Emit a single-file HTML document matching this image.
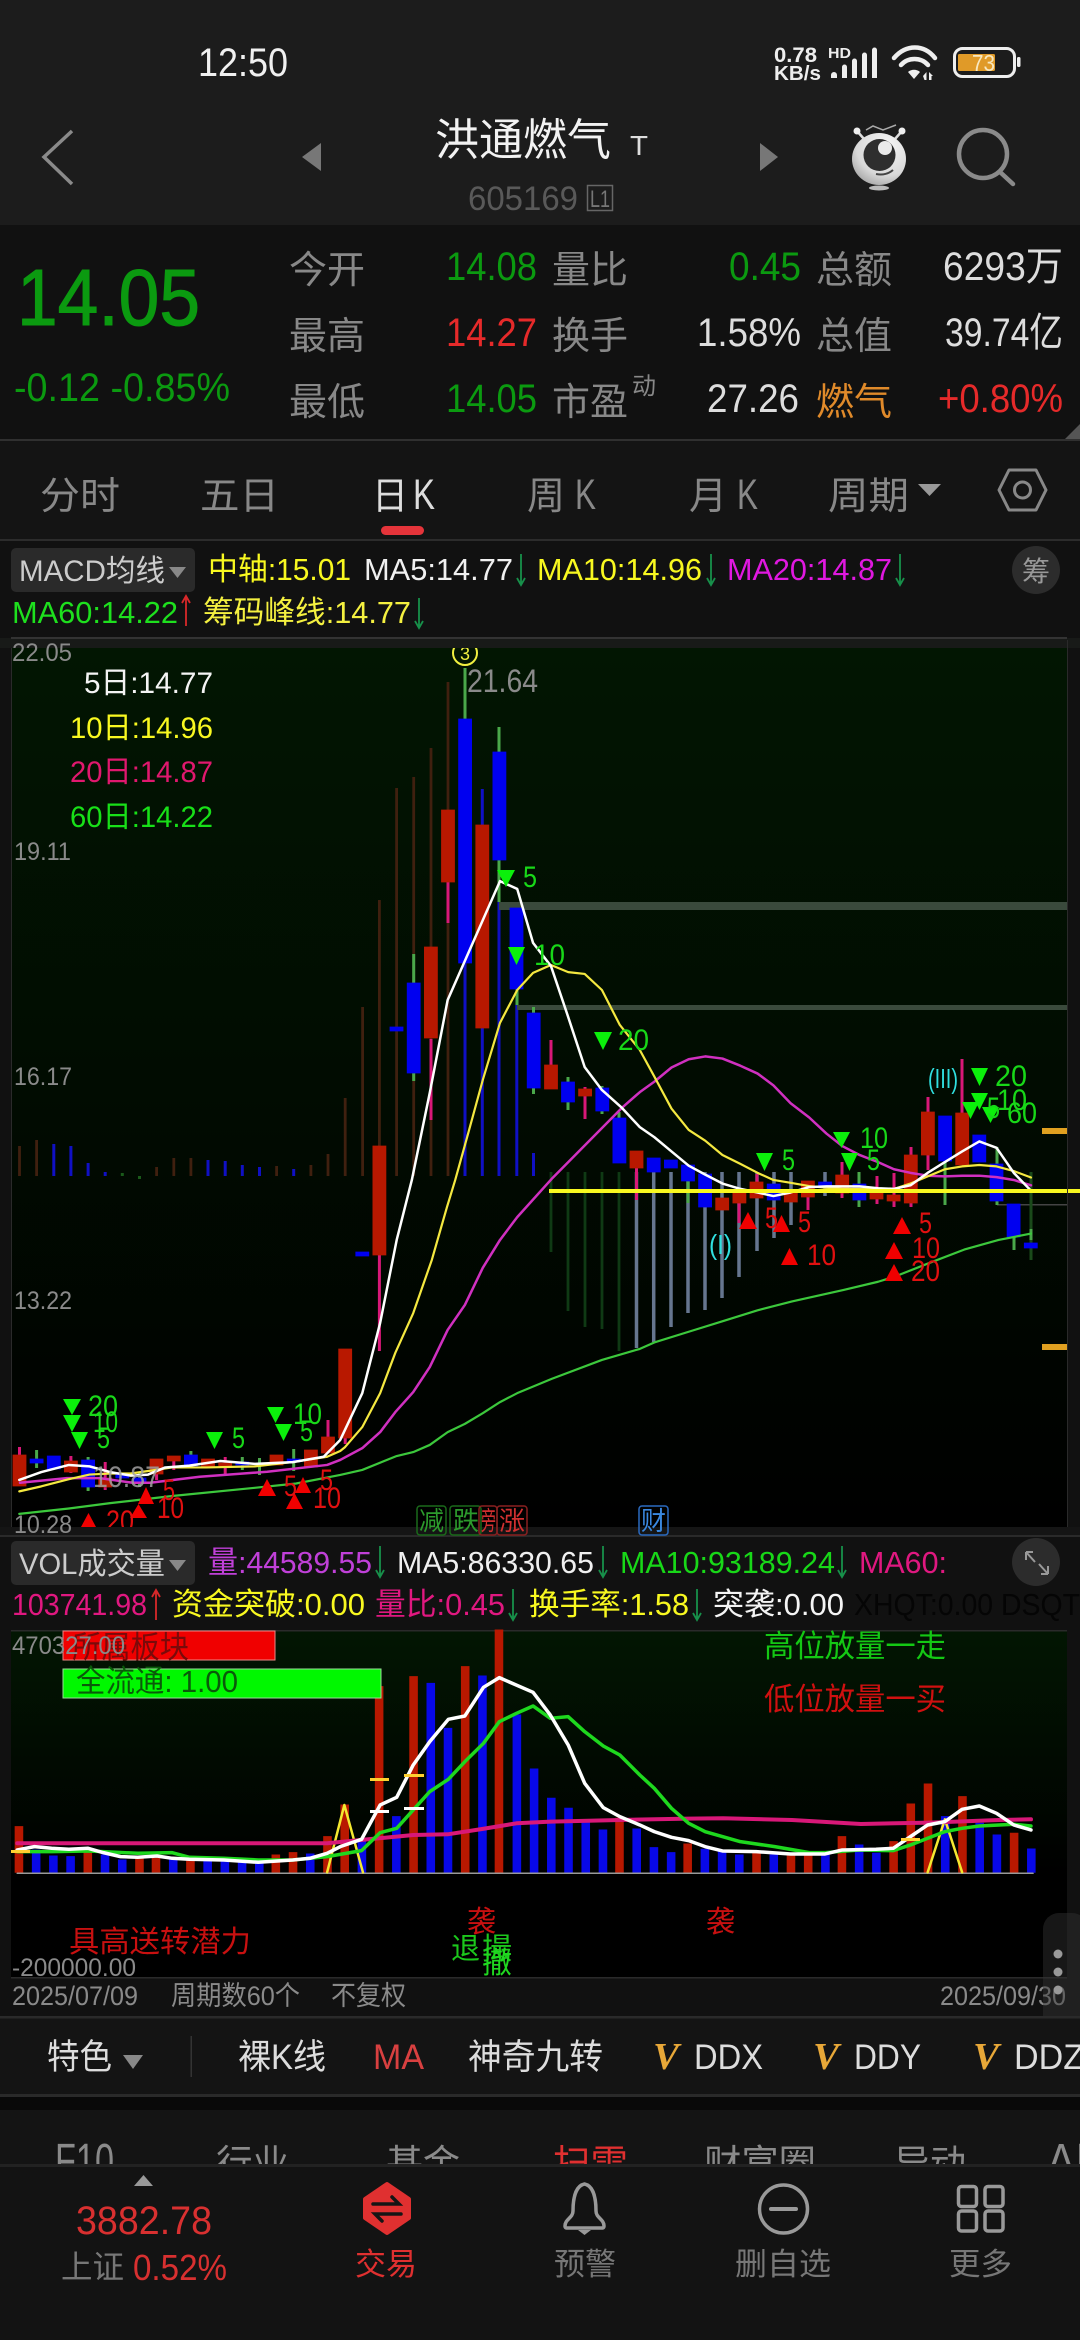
<!DOCTYPE html>
<html lang="zh-CN"><head><meta charset="utf-8"><title>洪通燃气</title>
<style>
html,body{margin:0;padding:0;background:#111;width:1080px;height:2340px;overflow:hidden}
svg{display:block;font-family:"Liberation Sans","Noto Sans CJK SC",sans-serif}
.n{vector-effect:non-scaling-stroke;fill:none;stroke-linejoin:round;stroke-linecap:round}
.b{vector-effect:non-scaling-stroke}
</style></head><body>
<svg width="1080" height="2340" viewBox="0 0 1080 2340" xmlns="http://www.w3.org/2000/svg">
<defs>
<linearGradient id="g1" x1="0" y1="0" x2="0" y2="1"><stop offset="0" stop-color="#021602"/><stop offset=".5" stop-color="#010c01"/><stop offset="1" stop-color="#000"/></linearGradient>
<linearGradient id="g2" x1="0" y1="0" x2="0" y2="1"><stop offset="0" stop-color="#021602"/><stop offset=".7" stop-color="#000"/><stop offset="1" stop-color="#000"/></linearGradient>
<radialGradient id="eg" cx=".65" cy=".25" r=".95"><stop offset="0" stop-color="#f6f6f6"/><stop offset=".6" stop-color="#d8d8d8"/><stop offset="1" stop-color="#8e8e8e"/></radialGradient>
</defs>
<rect width="1080" height="2340" fill="#111"/>
<!-- header -->
<rect width="1080" height="225" fill="#1c1c1c"/>
<text x="198" y="76" font-size="40" fill="#f0f0f0" textLength="90" lengthAdjust="spacingAndGlyphs">12:50</text>
<text x="774" y="62" font-size="21" font-weight="bold" fill="#eee" textLength="43" lengthAdjust="spacingAndGlyphs">0.78</text>
<text x="774" y="80" font-size="20" font-weight="bold" fill="#eee" textLength="47" lengthAdjust="spacingAndGlyphs">KB/s</text>
<text x="828" y="58" font-size="15" font-weight="bold" fill="#eee" textLength="23" lengthAdjust="spacingAndGlyphs">HD</text>
<path fill="#eee" d="M831 75a3 3 0 0 1 6 0v3h-6zM842 67a2.500 2.500 0 0 1 5 0v11h-5zM852 61a2.500 2.500 0 0 1 5 0v17h-5zM862 55a2.500 2.500 0 0 1 5 0v23h-5zM872 50a2.500 2.500 0 0 1 5 0v28h-5z"/>
<g fill="none" stroke="#eee" stroke-width="4.500" stroke-linecap="round"><path d="M894 58C906 44 924 44 935 58"/><path d="M901 65C908 57 921 57 928 65"/></g>
<path fill="#eee" d="M908 72C911 69 917 69 920 72L914 79z"/><path fill="#eee" d="M923 76l3.500-4v8h-2zM929 72l4 4h-1.500v4h-2.500z"/>
<rect x="954.500" y="48.500" width="60" height="28" rx="8" fill="none" stroke="#eee" stroke-width="3"/>
<rect x="958" y="54" width="37" height="17" rx="1.500" fill="#e09a28"/>
<text x="972" y="71" font-size="23" fill="#f8e8c0" textLength="23" lengthAdjust="spacingAndGlyphs">73</text>
<rect x="1017" y="57" width="3.500" height="10" rx="1.500" fill="#eee"/>

<path d="M72 131L44 157L72 184" fill="none" stroke="#8a8a8a" stroke-width="3.500"/>
<path d="M321 143V171L302 157z" fill="#777"/><path d="M760 143V171L778 157z" fill="#777"/>
<text x="435" y="155" font-size="44" fill="#f2f2f2" textLength="176" lengthAdjust="spacingAndGlyphs">洪通燃气</text>
<text x="630" y="155" font-size="28" fill="#ddd" textLength="18" lengthAdjust="spacingAndGlyphs">T</text>
<text x="468" y="210" font-size="34" fill="#595959" textLength="110" lengthAdjust="spacingAndGlyphs">605169</text>
<rect x="587.500" y="185.500" width="25" height="25" fill="none" stroke="#666" stroke-width="1.500"/>
<text x="590" y="207" font-size="24" fill="#777" textLength="20" lengthAdjust="spacingAndGlyphs">L1</text>
<!-- mascot -->
<path d="M866 130L873 126L883 130L896 125" fill="none" stroke="#aaa" stroke-width="1.500"/>
<path d="M857 131L864 139M902 131L895 139" fill="none" stroke="#ddd" stroke-width="2.500"/>
<circle cx="857" cy="131" r="3.500" fill="#eee"/><circle cx="902" cy="131" r="3.500" fill="#eee"/>
<ellipse cx="879" cy="159" rx="27" ry="26" fill="url(#eg)"/>
<circle cx="879.500" cy="155" r="16" fill="#2e2e2e"/><circle cx="885" cy="148" r="7" fill="#eaeaea"/>
<path d="M876 174Q886 176 893 170" stroke="#444" stroke-width="2" fill="none"/>
<ellipse cx="879" cy="188" rx="10" ry="2.500" fill="#bbb"/>
<!-- search -->
<circle cx="983" cy="154" r="24" fill="none" stroke="#8a8a8a" stroke-width="4.500"/><path d="M1000 172L1013 184" stroke="#8a8a8a" stroke-width="4.500" stroke-linecap="round"/>

<!-- stats -->
<text x="17" y="325" font-size="80" fill="#0b9a10" stroke="#0b9a10" stroke-width="1" textLength="183" lengthAdjust="spacingAndGlyphs">14.05</text>
<text x="14" y="401" font-size="40" fill="#0b9a10" textLength="216" lengthAdjust="spacingAndGlyphs">-0.12 -0.85%</text>
<g font-size="38" fill="#888">
<text x="289" y="283" textLength="76" lengthAdjust="spacingAndGlyphs">今开</text>
<text x="289" y="349" textLength="76" lengthAdjust="spacingAndGlyphs">最高</text>
<text x="289" y="415" textLength="76" lengthAdjust="spacingAndGlyphs">最低</text>
<text x="552" y="283" textLength="76" lengthAdjust="spacingAndGlyphs">量比</text>
<text x="552" y="349" textLength="76" lengthAdjust="spacingAndGlyphs">换手</text>
<text x="552" y="415" textLength="76" lengthAdjust="spacingAndGlyphs">市盈</text>
<text x="816" y="283" textLength="76" lengthAdjust="spacingAndGlyphs">总额</text>
<text x="816" y="349" textLength="76" lengthAdjust="spacingAndGlyphs">总值</text>
<text x="816" y="415" fill="#e08a2a" textLength="76" lengthAdjust="spacingAndGlyphs">燃气</text>
<text x="632" y="394" font-size="24" textLength="24" lengthAdjust="spacingAndGlyphs">动</text>
</g>
<g font-size="40">
<text x="446" y="280" fill="#0b9a10" textLength="91" lengthAdjust="spacingAndGlyphs">14.08</text>
<text x="446" y="346" fill="#e62a2a" textLength="91" lengthAdjust="spacingAndGlyphs">14.27</text>
<text x="446" y="412" fill="#0b9a10" textLength="91" lengthAdjust="spacingAndGlyphs">14.05</text>
<text x="729" y="280" fill="#0b9a10" textLength="72" lengthAdjust="spacingAndGlyphs">0.45</text>
<text x="697" y="346" fill="#ddd" textLength="104" lengthAdjust="spacingAndGlyphs">1.58%</text>
<text x="707" y="412" fill="#ddd" textLength="92" lengthAdjust="spacingAndGlyphs">27.26</text>
<text x="943" y="280" fill="#ddd" textLength="120" lengthAdjust="spacingAndGlyphs">6293万</text>
<text x="945" y="346" fill="#ddd" textLength="118" lengthAdjust="spacingAndGlyphs">39.74亿</text>
<text x="938" y="412" fill="#e62a2a" textLength="125" lengthAdjust="spacingAndGlyphs">+0.80%</text>
</g>
<path d="M1080 424V440H1064z" fill="#555"/>
<rect y="439" width="1080" height="2.500" fill="#303030"/>
<!-- tabs -->
<rect y="441" width="1080" height="98" fill="#141414"/>
<g font-size="38" fill="#888">
<text x="40" y="509" textLength="80" lengthAdjust="spacingAndGlyphs">分时</text>
<text x="200" y="509" textLength="79" lengthAdjust="spacingAndGlyphs">五日</text>
<text x="372" y="509" fill="#ddd" textLength="36" lengthAdjust="spacingAndGlyphs">日</text>
<text x="413" y="509" font-size="43" fill="#ddd" textLength="22" lengthAdjust="spacingAndGlyphs">K</text>
<text x="527" y="509" textLength="38" lengthAdjust="spacingAndGlyphs">周</text>
<text x="575" y="509" font-size="43" textLength="21" lengthAdjust="spacingAndGlyphs">K</text>
<text x="689" y="509" textLength="38" lengthAdjust="spacingAndGlyphs">月</text>
<text x="737" y="509" font-size="43" textLength="21" lengthAdjust="spacingAndGlyphs">K</text>
<text x="828" y="509" textLength="81" lengthAdjust="spacingAndGlyphs">周期</text>
</g>
<path d="M918 484H941L929.500 496z" fill="#999"/>
<path d="M1009 470H1036L1046 490L1036 510H1009L999 490z" fill="none" stroke="#888" stroke-width="3" stroke-linejoin="round"/><circle cx="1022.500" cy="490" r="8" fill="none" stroke="#888" stroke-width="3"/>
<rect x="381" y="526" width="43" height="9" rx="4.500" fill="#e5343a"/>
<rect y="539" width="1080" height="2" fill="#2c2c2c"/>

<!-- indicator row 1 -->
<rect x="11" y="548" width="184" height="44" rx="5" fill="#2a2a2a"/>
<text x="19" y="581" font-size="30" fill="#ccc" textLength="146" lengthAdjust="spacingAndGlyphs">MACD均线</text>
<path d="M169 567H186L177.500 578z" fill="#888"/>
<g font-size="31">
<text x="208" y="580" fill="#f8f820" textLength="143" lengthAdjust="spacingAndGlyphs">中轴:15.01</text>
<text x="364" y="580" fill="#f0f0f0" textLength="149" lengthAdjust="spacingAndGlyphs">MA5:14.77</text>
<text x="537" y="580" fill="#f8f820" textLength="165" lengthAdjust="spacingAndGlyphs">MA10:14.96</text>
<text x="727" y="580" fill="#e018e0" textLength="165" lengthAdjust="spacingAndGlyphs">MA20:14.87</text>
<text x="12" y="623" fill="#1ee01e" textLength="166" lengthAdjust="spacingAndGlyphs">MA60:14.22</text>
<text x="203" y="623" fill="#f4f040" textLength="208" lengthAdjust="spacingAndGlyphs">筹码峰线:14.77</text>
</g>
<path d="M521 554V585M517 578L521 585L525 578M711 554V585M707 578L711 585L715 578M900 554V585M896 578L900 585L904 578M419 598V628M415 621L419 628L423 621" fill="none" stroke="#17904a" stroke-width="1.800"/>
<path d="M186 626V596M182 603L186 596L190 603" fill="none" stroke="#d8282a" stroke-width="1.800"/>
<ellipse cx="1036" cy="570" rx="24" ry="24" fill="#2c2c2c"/>
<text x="1022" y="581" font-size="28" fill="#999">筹</text>

<!-- main chart -->
<rect x="11" y="638" width="1056" height="889" fill="url(#g1)"/>
<!-- MACD bars -->
<path stroke="#40200f" stroke-width="2.800" fill="none" d="M19.500 1146V1176M36.600 1140V1176M156.600 1167V1176M173.800 1158V1176M190.900 1158V1176M276.600 1166V1176M310.900 1165V1176M328 1154V1176M345.200 1098V1176M362.600 1007V1176M379.400 900V1176M396.600 788V1176M413.700 777V1176M431 748V1176M448 682V1176"/>
<path stroke="#1010c4" stroke-width="3" fill="none" d="M53.800 1144V1176M70.900 1146V1176M88.100 1163V1176M105.200 1172V1176M208 1160V1176M225.200 1161V1176M242.300 1165V1176M259.500 1167V1176M293.700 1169V1176M465 719V1176M482.300 789V1176M499 902V1176M516.800 1005V1176M533.500 1153V1176"/>
<path stroke="#1a5a1a" stroke-width="3" fill="none" d="M122.300 1173V1176M139.500 1176V1179"/>
<path stroke="#0f3a14" stroke-width="2.800" fill="none" d="M551 1172V1252M568 1172V1311M585 1172V1327M602 1172V1329M619 1172V1351"/>
<path stroke="#66768f" stroke-width="3.500" fill="none" d="M636.500 1172V1348M653.700 1172V1342M671 1172V1327M688 1172V1313M705 1172V1310M722 1172V1298M739 1172V1277M757 1172V1251M774 1172V1238M791 1172V1225M825 1172V1196"/>
<!-- bands -->
<rect x="499" y="902" width="568" height="8" fill="#3a4a3c"/>
<rect x="517" y="1005" width="550" height="5" fill="#3a4a3c"/>
<rect x="997" y="1204" width="70" height="1.500" fill="#444"/>
<rect x="1042" y="1128" width="25" height="6" fill="#e0a020"/><rect x="1042" y="1344" width="25" height="6" fill="#e0a020"/>
<!-- wicks -->
<path stroke="#d81878" stroke-width="3" fill="none" d="M19.500 1447V1455M70.900 1456V1473M105.200 1462V1490M225.200 1457V1475M156.600 1474V1480M173.800 1461V1470M328 1420V1437M345.200 1438V1444M379.400 1255V1351M431 1039V1120M448 882V923M551 1040V1065M585 1087V1119M636.500 1163V1200M739 1203V1223M757 1174V1182M808 1197V1210M842 1162V1198M877 1176V1204M894 1173V1207M911 1147V1207M928 1097V1170M962 1059V1113"/>
<path stroke="#4aa84a" stroke-width="3" fill="none" d="M36.600 1450V1468M88.100 1457V1491M139.500 1473V1487M190.900 1451V1455M242.300 1457V1470M259.500 1458V1475M293.700 1449V1471M413.700 954V983M413.700 1073V1081M465 668V719M499 727V752M499 860V902M517 989V1005M533.500 1007V1013M533.500 1088V1094M568 1077V1110M602 1086V1114M619 1112V1119M688 1181V1203M859 1172V1207M945 1161V1205M997 1147V1164M997 1201V1205M1014 1237V1250M1031 1229V1240"/>
<path stroke="#1a4a1a" stroke-width="3" fill="none" d="M1031 1172V1229M1031 1240V1260"/>
<!-- bodies -->
<path fill="#b81800" stroke="#b81800" stroke-width=".8" d="M13 1455h13v31h-13zM64.400 1461h13v11h-13zM98.700 1478h13v9h-13zM150 1459h13v15h-13zM167.300 1456h13v5h-13zM201.500 1459h13v8h-13zM218.700 1463h13v3h-13zM270 1455h13v10h-13zM304.400 1450h13v17h-13zM321.500 1437h13v16h-13zM338.700 1349h13v89h-13zM372.900 1146h13v109h-13zM424.400 947h13v91h-13zM441.500 810h13v72h-13zM475.800 825h13v203h-13zM544.500 1065h13v24h-13zM578.600 1089h13v7h-13zM630 1151h13v17h-13zM715.700 1198h13v12h-13zM732.900 1193h13v10h-13zM750 1182h13v16h-13zM784.300 1190h13v12h-13zM801.400 1181h13v16h-13zM835.700 1175h13v18h-13zM870 1188h13v11h-13zM887.100 1195h13v6h-13zM904.300 1155h13v48h-13zM921.400 1112h13v43h-13zM955.700 1113h13v52h-13z"/>
<path fill="#0000f0" stroke="#0000f0" stroke-width=".8" d="M30.100 1459h13v4h-13zM47.300 1456h13v13h-13zM81.600 1460h13v27h-13zM115.800 1473h13v5h-13zM133 1478h13v5h-13zM184.400 1455h13v11h-13zM235.800 1462h13v3h-13zM287.200 1459h13v3h-13zM355.800 1252h13v4h-13zM390 1027h13v4h-13zM407.200 983h13v90h-13zM458.600 719h13v244h-13zM492.900 752h13v108h-13zM510 908h13v81h-13zM527.200 1013h13v75h-13zM561.500 1082h13v20h-13zM595.800 1088h13v23h-13zM612.900 1118h13v45h-13zM647.200 1158h13v14h-13zM664.400 1160h13v8h-13zM681.500 1165h13v16h-13zM698.600 1174h13v33h-13zM767.200 1184h13v16h-13zM818.600 1182h13v5h-13zM852.900 1184h13v16h-13zM938.600 1116h13v45h-13zM972.800 1135h13v27h-13zM990 1164h13v37h-13zM1007.100 1204h13v33h-13zM1024.300 1243h13v5h-13z"/>
<!-- MA lines -->
<g transform="translate(0,980) scale(.6887,.3571)">
<polyline class="n" stroke="#3cc83c" stroke-width="2.200" points="28,1495 100,1480 160,1465 250,1445 370,1422 430,1410 494,1386 526,1372 576,1333 600,1322 624,1302 650,1266 675,1243 701,1213 726,1182 751,1157 801,1117 874,1064 929,1033 950,1015 1000,985 1050,955 1100,925 1150,900 1225,868 1275,845 1300,830 1350,792 1400,755 1450,728 1497,710"/>
<polyline class="n" stroke="#d030c0" stroke-width="2.500" points="29,1408 97,1395 145,1395 193,1408 218,1408 290,1391 388,1377 475,1358 494,1344 526,1311 552,1266 574,1210 600,1154 624,1084 650,980 675,910 701,806 726,728 751,664 801,557 903,358 929,314 950,285 975,245 1000,222 1024,214 1049,220 1075,240 1100,262 1123,295 1148,345 1175,385 1200,430 1223,465 1248,490 1275,510 1298,530 1322,540 1347,548 1372,550 1397,548 1422,548 1447,552 1472,560 1497,575"/>
<polyline class="n" stroke="#f4e840" stroke-width="2.200" points="28,1432 60,1418 100,1398 130,1385 160,1382 190,1382 215,1375 250,1365 300,1365 370,1362 425,1350 475,1335 494,1319 501,1308 526,1252 552,1157 574,1044 600,933 627,784 649,636 661,560 680,428 701,280 726,120 751,28 774,-20 800,-42 825,-22 849,-17 874,28 900,126 929,196 950,270 975,360 1000,420 1024,450 1049,490 1075,515 1100,540 1123,560 1148,568 1175,577 1200,582 1223,585 1248,585 1298,585 1322,570 1347,550 1372,530 1397,522 1422,518 1447,522 1472,535 1497,553"/>
<polyline class="n" stroke="#fff" stroke-width="2.500" points="28,1400 60,1378 100,1358 130,1362 160,1378 190,1388 215,1385 240,1365 275,1360 320,1347 370,1355 425,1350 470,1335 494,1288 526,1157 552,960 576,728 598,560 624,316 650,56 726,-277 751,-255 774,-104 800,-39 823,92 849,244 874,308 903,358 929,412 950,440 975,480 1000,520 1024,545 1049,570 1075,585 1100,595 1123,605 1148,595 1175,580 1200,578 1248,578 1275,583 1298,585 1322,575 1347,540 1372,510 1397,480 1422,452 1447,470 1472,540 1497,590"/>
</g>
<rect x="549" y="1189" width="531" height="4" fill="#f8f820"/>
<!-- triangles -->
<path fill="#0bf00b" d="M63 1399h18l-9 16zM63 1415h18l-9 17zM71 1432h17l-8.500 17zM206 1432h17l-8.500 17zM267 1407h17l-8.500 16zM275 1424h17l-8.500 17zM497 870h18l-9 17zM508 947h17l-8.500 18zM594 1032h18l-9 18zM971 1068h17l-8.500 18zM971 1093h17l-8.500 17zM962 1102h17l-8.500 17zM982 1107h17l-8.500 16zM833 1132h17l-8.500 16zM841 1153h17l-8.500 18zM756 1153h17l-8.500 18z"/>
<path fill="#f00000" d="M146 1487l8 17h-16zM138.500 1504l8.500 14h-17zM88.500 1513l7.500 14h-15zM267 1479l9 17h-18zM303 1477l8 16h-16zM294.500 1493l8.500 16h-17zM748 1212l9 17h-18zM781.500 1215l8.500 17h-17zM789.500 1248l8.500 17h-17zM902 1217l9 17h-18zM894 1242l9 17h-18zM894 1264l9 17h-18z"/>
<!-- green labels -->
<g font-size="30" fill="#18d818">
<text x="88" y="1416" textLength="30" lengthAdjust="spacingAndGlyphs">20</text>
<text x="93" y="1432" textLength="25" lengthAdjust="spacingAndGlyphs">10</text>
<text x="97" y="1448" textLength="13" lengthAdjust="spacingAndGlyphs">5</text>
<text x="232" y="1448" textLength="13" lengthAdjust="spacingAndGlyphs">5</text>
<text x="293" y="1424" textLength="29" lengthAdjust="spacingAndGlyphs">10</text>
<text x="300" y="1441" textLength="13" lengthAdjust="spacingAndGlyphs">5</text>
<text x="523" y="887" textLength="14" lengthAdjust="spacingAndGlyphs">5</text>
<text x="534" y="965" textLength="31" lengthAdjust="spacingAndGlyphs">10</text>
<text x="618" y="1050" textLength="31" lengthAdjust="spacingAndGlyphs">20</text>
<text x="995" y="1086" textLength="32" lengthAdjust="spacingAndGlyphs">20</text>
<text x="997" y="1110" textLength="30" lengthAdjust="spacingAndGlyphs">10</text>
<text x="987" y="1118" textLength="13" lengthAdjust="spacingAndGlyphs">5</text>
<text x="1007" y="1123" textLength="30" lengthAdjust="spacingAndGlyphs">60</text>
<text x="860" y="1148" textLength="28" lengthAdjust="spacingAndGlyphs">10</text>
<text x="867" y="1170" textLength="13" lengthAdjust="spacingAndGlyphs">5</text>
<text x="782" y="1170" textLength="13" lengthAdjust="spacingAndGlyphs">5</text>
</g>
<!-- red labels -->
<g font-size="30" fill="#e01010">
<text x="163" y="1500" textLength="12" lengthAdjust="spacingAndGlyphs">5</text>
<text x="157" y="1518" textLength="27" lengthAdjust="spacingAndGlyphs">10</text>
<text x="106" y="1531" textLength="28" lengthAdjust="spacingAndGlyphs">20</text>
<text x="284" y="1496" textLength="13" lengthAdjust="spacingAndGlyphs">5</text>
<text x="320" y="1490" textLength="13" lengthAdjust="spacingAndGlyphs">5</text>
<text x="313" y="1508" textLength="28" lengthAdjust="spacingAndGlyphs">10</text>
<text x="765" y="1228" textLength="13" lengthAdjust="spacingAndGlyphs">5</text>
<text x="798" y="1232" textLength="13" lengthAdjust="spacingAndGlyphs">5</text>
<text x="807" y="1265" textLength="29" lengthAdjust="spacingAndGlyphs">10</text>
<text x="919" y="1233" textLength="13" lengthAdjust="spacingAndGlyphs">5</text>
<text x="912" y="1258" textLength="28" lengthAdjust="spacingAndGlyphs">10</text>
<text x="911" y="1281" textLength="29" lengthAdjust="spacingAndGlyphs">20</text>
</g>
<text x="928" y="1088" font-size="28" fill="#30e0e0" textLength="30" lengthAdjust="spacingAndGlyphs">(III)</text>
<text x="709" y="1254" font-size="28" fill="#30e0e0" textLength="23" lengthAdjust="spacingAndGlyphs">(I)</text>
<text x="93" y="1487" font-size="30" fill="#a0a0a0" opacity=".85" textLength="67" lengthAdjust="spacingAndGlyphs">10.87</text>
<!-- bands over chart -->
<circle cx="465" cy="653" r="12" fill="none" stroke="#f0f040" stroke-width="2"/>
<text x="460" y="660" font-size="18" fill="#f0f040">3</text>
<rect x="0" y="638" width="1080" height="10" fill="#181a18"/>
<rect x="11" y="637" width="1056" height="2" fill="#333"/>
<rect x="0" y="1527" width="1080" height="8" fill="#151515"/>
<rect x="0" y="1535" width="1080" height="2" fill="#2a2a2a"/>
<rect x="11" y="648" width="1" height="879" fill="#2a2a2a"/><rect x="1067" y="640" width="1" height="887" fill="#2a2a2a"/>
<text x="467" y="692" font-size="32" fill="#8a8a8a" textLength="71" lengthAdjust="spacingAndGlyphs">21.64</text>
<g font-size="25" fill="#8a8a8a">
<text x="12" y="661" textLength="60" lengthAdjust="spacingAndGlyphs">22.05</text>
<text x="14" y="860" textLength="57" lengthAdjust="spacingAndGlyphs">19.11</text>
<text x="14" y="1085" textLength="58" lengthAdjust="spacingAndGlyphs">16.17</text>
<text x="14" y="1309" textLength="58" lengthAdjust="spacingAndGlyphs">13.22</text>
<text x="14" y="1533" textLength="58" lengthAdjust="spacingAndGlyphs">10.28</text>
</g>
<g font-size="30">
<text x="84" y="693" fill="#f4f4f4" textLength="129" lengthAdjust="spacingAndGlyphs">5日:14.77</text>
<text x="70" y="738" fill="#f8f820" textLength="143" lengthAdjust="spacingAndGlyphs">10日:14.96</text>
<text x="70" y="782" fill="#e0186e" textLength="143" lengthAdjust="spacingAndGlyphs">20日:14.87</text>
<text x="70" y="827" fill="#18e018" textLength="143" lengthAdjust="spacingAndGlyphs">60日:14.22</text>
</g>
<!-- badges -->
<g fill="none" stroke-width="1.500">
<rect x="417" y="1506" width="29" height="29" rx="3" stroke="#1a6a1a"/><rect x="450" y="1506" width="31" height="29" rx="3" stroke="#1a6a1a"/>
<rect x="479" y="1506" width="18" height="29" rx="3" stroke="#8a2020"/><rect x="497" y="1506" width="30" height="29" rx="3" stroke="#8a2020"/>
<rect x="639" y="1506" width="29" height="29" rx="3" stroke="#2a6ac0"/></g>
<g font-size="26">
<text x="419" y="1530" fill="#2c9a2c" textLength="25" lengthAdjust="spacingAndGlyphs">减</text>
<text x="453" y="1530" fill="#2c9a2c" textLength="26" lengthAdjust="spacingAndGlyphs">跌</text>
<text x="481" y="1530" fill="#d03030" textLength="15" lengthAdjust="spacingAndGlyphs">旁</text>
<text x="499" y="1530" fill="#d03030" textLength="26" lengthAdjust="spacingAndGlyphs">涨</text>
<text x="641" y="1530" fill="#3a88e0" textLength="25" lengthAdjust="spacingAndGlyphs">财</text>
</g>

<!-- VOL header -->
<rect x="11" y="1541" width="184" height="44" rx="5" fill="#2a2a2a"/>
<text x="19" y="1574" font-size="30" fill="#ccc" textLength="146" lengthAdjust="spacingAndGlyphs">VOL成交量</text>
<path d="M169 1560H186L177.500 1571z" fill="#888"/>
<g font-size="31">
<text x="208" y="1573" fill="#c040d8" textLength="164" lengthAdjust="spacingAndGlyphs">量:44589.55</text>
<text x="397" y="1573" fill="#f0f0f0" textLength="197" lengthAdjust="spacingAndGlyphs">MA5:86330.65</text>
<text x="620" y="1573" fill="#18d818" textLength="215" lengthAdjust="spacingAndGlyphs">MA10:93189.24</text>
<text x="859" y="1573" fill="#e01880" textLength="88" lengthAdjust="spacingAndGlyphs">MA60:</text>
<text x="12" y="1615" fill="#e01880" textLength="135" lengthAdjust="spacingAndGlyphs">103741.98</text>
<text x="172" y="1615" fill="#f8f820" textLength="193" lengthAdjust="spacingAndGlyphs">资金突破:0.00</text>
<text x="375" y="1615" fill="#e01880" textLength="130" lengthAdjust="spacingAndGlyphs">量比:0.45</text>
<text x="529" y="1615" fill="#f8f820" textLength="160" lengthAdjust="spacingAndGlyphs">换手率:1.58</text>
<text x="713" y="1615" fill="#f4f4f4" textLength="131" lengthAdjust="spacingAndGlyphs">突袭:0.00</text>
<text x="854" y="1615" fill="#050505" textLength="226" lengthAdjust="spacingAndGlyphs">XHQT:0.00 DSQT</text>
</g>
<path d="M380 1546V1577M376 1570L380 1577L384 1570M603 1546V1577M599 1570L603 1577L607 1570M842 1546V1577M838 1570L842 1577L846 1570M513 1589V1620M509 1613L513 1620L517 1613M697 1589V1620M693 1613L697 1620L701 1613" fill="none" stroke="#17904a" stroke-width="1.800"/>
<path d="M156 1620V1590M152 1597L156 1590L160 1597" fill="none" stroke="#d8282a" stroke-width="1.800"/>
<ellipse cx="1036" cy="1562" rx="24" ry="24" fill="#2c2c2c"/>
<path d="M1026 1552L1035 1562M1026 1552V1560M1026 1552H1033M1048 1574L1039 1564M1048 1574V1566M1048 1574H1041" fill="none" stroke="#999" stroke-width="2"/>

<!-- volume chart -->
<rect x="11" y="1631" width="1056" height="347" fill="url(#g2)"/>
<rect x="11" y="1630" width="1056" height="1.500" fill="#2a2a2a"/>
<rect x="11" y="1977" width="1056" height="1.500" fill="#2a2a2a"/>
<g transform="translate(0,1530) scale(.6887,.3333)">
<path class="b" fill="#b81800" stroke="#b81800" stroke-width="1" d="M22 890h11v137h-11zM122 960h11v67h-11zM197 985h11v42h-11zM221 985h11v42h-11zM271 990h11v37h-11zM395 975h11v52h-11zM420 968h11v59h-11zM470 920h11v107h-11zM495 825h11v202h-11zM545 470h11v557h-11zM595 440h11v587h-11zM670 410h11v617h-11zM719 300h11v727h-11zM894 865h11v162h-11zM993 942h11v85h-11zM1093 965h11v62h-11zM1143 975h11v52h-11zM1168 975h11v52h-11zM1217 920h11v107h-11zM1292 935h11v92h-11zM1317 822h11v205h-11zM1342 762h11v265h-11zM1392 800h11v227h-11zM1467 910h11v117h-11z"/>
<path class="b" fill="#0808e8" stroke="#0808e8" stroke-width="1" d="M47 960h11v67h-11zM72 978h11v49h-11zM97 980h11v47h-11zM147 975h11v52h-11zM172 990h11v37h-11zM246 985h11v42h-11zM296 990h11v37h-11zM321 995h11v32h-11zM346 995h11v32h-11zM371 1000h11v27h-11zM445 972h11v55h-11zM520 930h11v97h-11zM570 860h11v167h-11zM620 460h11v567h-11zM645 595h11v432h-11zM695 438h11v589h-11zM745 555h11v472h-11zM770 717h11v310h-11zM795 805h11v222h-11zM820 835h11v192h-11zM845 875h11v152h-11zM870 900h11v127h-11zM919 897h11v130h-11zM944 953h11v74h-11zM969 968h11v59h-11zM1018 958h11v69h-11zM1043 965h11v62h-11zM1068 975h11v52h-11zM1118 975h11v52h-11zM1193 975h11v52h-11zM1242 945h11v82h-11zM1267 970h11v57h-11zM1367 860h11v167h-11zM1417 880h11v147h-11zM1442 915h11v112h-11zM1492 957h11v70h-11z"/>
<polyline class="n" stroke="#999" stroke-width="1.500" points="25,1030 1500,1030"/>
<polyline class="n" stroke="#f4e830" stroke-width="2.500" points="475,1027 500,825 527,1027"/>
<polyline class="n" stroke="#f4e830" stroke-width="2.500" points="1347,1027 1372,868 1397,1027"/>
<polyline class="n" stroke="#d81878" stroke-width="4" points="25,940 475,940 550,925 600,915 650,913 700,897 750,880 800,875 900,870 1000,866 1050,865 1150,870 1250,882 1350,878 1450,870 1497,868"/>
<polyline class="n" stroke="#1ed81e" stroke-width="3.500" points="25,965 75,965 128,963 150,965 200,970 250,968 275,982 325,985 375,990 425,990 475,980 525,962 552,908 576,895 600,840 624,785 651,748 675,695 702,640 725,575 750,550 774,528 799,565 825,560 849,605 876,648 900,675 929,735 950,775 975,835 1000,880 1024,905 1075,935 1125,950 1175,968 1198,968 1248,960 1297,962 1322,945 1347,925 1372,905 1397,895 1422,888 1472,883 1497,888"/>
<polyline class="n" stroke="#fff" stroke-width="3.500" points="25,960 50,950 75,955 100,958 128,955 150,968 175,980 200,982 228,978 250,985 275,988 325,990 375,997 425,990 450,985 475,970 494,950 525,928 552,825 576,802 600,705 624,635 651,568 675,558 702,472 725,443 774,487 799,555 825,645 849,760 876,833 900,860 929,885 950,905 975,922 1000,932 1024,950 1049,963 1098,965 1148,972 1198,972 1223,960 1272,958 1297,955 1322,920 1347,885 1372,875 1397,838 1422,828 1447,850 1472,885 1497,900"/>
</g>
<path fill="#ffd030" d="M370 1778h19v3h-19zM404 1774h20v3h-20zM901 1838h19v3h-19z"/>
<path fill="#fff" d="M370 1810h19v3h-19zM404 1807h20v3h-20z"/>
<rect x="11" y="1850" width="19" height="3" fill="#ffd030"/>
<rect x="63" y="1631" width="212" height="29" fill="#f00000" stroke="#e88" stroke-width="1"/>
<text x="72" y="1658" font-size="31" fill="#7a0a0a" textLength="117" lengthAdjust="spacingAndGlyphs">所属板块</text>
<text x="12" y="1654" font-size="25" fill="#8a8a8a" textLength="113" lengthAdjust="spacingAndGlyphs">470327.00</text>
<rect x="63" y="1669" width="318" height="29" fill="#00f800" stroke="#9d9" stroke-width="1"/>
<text x="76" y="1692" font-size="31" fill="#0a5a0a" textLength="162" lengthAdjust="spacingAndGlyphs">全流通: 1.00</text>
<text x="764" y="1657" font-size="31" fill="#14c814" textLength="182" lengthAdjust="spacingAndGlyphs">高位放量一走</text>
<text x="764" y="1710" font-size="31" fill="#d01010" textLength="182" lengthAdjust="spacingAndGlyphs">低位放量一买</text>
<text x="467" y="1932" font-size="30" fill="#c81010" textLength="29" lengthAdjust="spacingAndGlyphs">袭</text>
<text x="706" y="1932" font-size="30" fill="#c81010" textLength="29" lengthAdjust="spacingAndGlyphs">袭</text>
<text x="451" y="1959" font-size="30" fill="#1cc81c" textLength="29" lengthAdjust="spacingAndGlyphs">退</text>
<text x="482" y="1959" font-size="30" fill="#1cc81c" textLength="30" lengthAdjust="spacingAndGlyphs">撮</text>
<text x="482" y="1973" font-size="30" fill="#20d820" textLength="30" lengthAdjust="spacingAndGlyphs">撤</text>
<text x="69" y="1952" font-size="30" fill="#c81010" textLength="182" lengthAdjust="spacingAndGlyphs">具高送转潜力</text>
<text x="12" y="1976" font-size="25" fill="#8a8a8a" textLength="124" lengthAdjust="spacingAndGlyphs">-200000.00</text>

<!-- footer row -->
<g font-size="27" fill="#8a8a8a">
<text x="12" y="2005" textLength="126" lengthAdjust="spacingAndGlyphs">2025/07/09</text>
<text x="171" y="2005" textLength="129" lengthAdjust="spacingAndGlyphs">周期数60个</text>
<text x="331" y="2005" textLength="75" lengthAdjust="spacingAndGlyphs">不复权</text>
<text x="940" y="2005" textLength="126" lengthAdjust="spacingAndGlyphs">2025/09/30</text>
</g>
<rect x="1043" y="1913" width="45" height="119" rx="16" fill="#333" opacity=".45"/>
<ellipse cx="1058" cy="1954" rx="4.500" ry="4.500" fill="#999"/><ellipse cx="1058" cy="1972" rx="4.500" ry="4.500" fill="#999"/><ellipse cx="1058" cy="1990" rx="4.500" ry="4.500" fill="#999"/>
<rect y="2016" width="1080" height="2.500" fill="#2a2a2a"/>

<!-- toolbar -->
<rect y="2018.500" width="1080" height="76" fill="#141414"/>
<g font-size="35" fill="#ddd">
<text x="47" y="2069" textLength="65" lengthAdjust="spacingAndGlyphs">特色</text>
<text x="238" y="2069" textLength="88" lengthAdjust="spacingAndGlyphs">裸K线</text>
<text x="373" y="2069" fill="#d84040" textLength="51" lengthAdjust="spacingAndGlyphs">MA</text>
<text x="468" y="2069" textLength="135" lengthAdjust="spacingAndGlyphs">神奇九转</text>
<text x="694" y="2069" textLength="69" lengthAdjust="spacingAndGlyphs">DDX</text>
<text x="854" y="2069" textLength="67" lengthAdjust="spacingAndGlyphs">DDY</text>
<text x="1014" y="2069" textLength="70" lengthAdjust="spacingAndGlyphs">DDZ</text>
</g>
<path d="M123 2055H143L133 2069z" fill="#888"/>
<rect x="190.500" y="2036" width="1.500" height="41" fill="#333"/>
<g font-family="Liberation Serif,serif" font-style="italic" font-weight="bold" font-size="38" fill="#e8a838">
<text x="653" y="2069" textLength="26" lengthAdjust="spacingAndGlyphs">V</text>
<text x="813" y="2069" textLength="26" lengthAdjust="spacingAndGlyphs">V</text>
<text x="973" y="2069" textLength="26" lengthAdjust="spacingAndGlyphs">V</text>
</g>
<rect y="2094" width="1080" height="3" fill="#2a2a2a"/>
<rect y="2097" width="1080" height="13" fill="#090909"/>
<rect y="2110" width="1080" height="60" fill="#141414"/>
<g font-size="38" fill="#8a8a8a">
<text x="55" y="2177" font-size="48" textLength="59" lengthAdjust="spacingAndGlyphs">F10</text>
<text x="216" y="2177" textLength="73" lengthAdjust="spacingAndGlyphs">行业</text>
<text x="386" y="2177" textLength="74" lengthAdjust="spacingAndGlyphs">基金</text>
<text x="553" y="2177" fill="#e03030" textLength="75" lengthAdjust="spacingAndGlyphs">扫雷</text>
<text x="704" y="2177" textLength="112" lengthAdjust="spacingAndGlyphs">财富圈</text>
<text x="894" y="2177" textLength="72" lengthAdjust="spacingAndGlyphs">异动</text>
<text x="1047" y="2177" font-size="48" textLength="40" lengthAdjust="spacingAndGlyphs">AI</text>
</g>
<!-- bottom bar -->
<rect y="2164" width="1080" height="176" fill="#131313"/>
<rect y="2164" width="1080" height="3" fill="#222"/>
<path d="M143.500 2175L153 2186H134z" fill="#999"/>
<text x="76" y="2234" font-size="40" fill="#d83030" textLength="136" lengthAdjust="spacingAndGlyphs">3882.78</text>
<text x="61" y="2278" font-size="32" fill="#777" textLength="63" lengthAdjust="spacingAndGlyphs">上证</text>
<text x="133" y="2280" font-size="36" fill="#d83030" textLength="94" lengthAdjust="spacingAndGlyphs">0.52%</text>
<path d="M387 2184L409 2199V2218L387 2233L365 2218V2199z" fill="#e03030" stroke="#e03030" stroke-width="4" stroke-linejoin="round"/>
<path d="M373 2204H399L392 2197M401 2214H375L382 2221" fill="none" stroke="#151515" stroke-width="3.500" stroke-linecap="round"/>
<g font-size="31">
<text x="355" y="2275" fill="#e03030" textLength="62" lengthAdjust="spacingAndGlyphs">交易</text>
<text x="554" y="2275" fill="#777" textLength="62" lengthAdjust="spacingAndGlyphs">预警</text>
<text x="735" y="2275" fill="#777" textLength="96" lengthAdjust="spacingAndGlyphs">删自选</text>
<text x="949" y="2275" fill="#777" textLength="63" lengthAdjust="spacingAndGlyphs">更多</text>
</g>
<path d="M584.500 2184C575 2186 573 2200 573 2211C573 2218 565 2219 565 2226C565 2228 566 2228 568 2228H601C603 2228 604 2228 604 2226C604 2219 596 2218 596 2211C596 2200 594 2186 584.500 2184Z" fill="none" stroke="#999" stroke-width="3.500" stroke-linejoin="round"/>
<path d="M578 2230H591L584.500 2235z" fill="#999"/>
<circle cx="783.500" cy="2209" r="24" fill="none" stroke="#999" stroke-width="3.500"/><path d="M771 2209H796" stroke="#999" stroke-width="4" stroke-linecap="round"/>
<g fill="none" stroke="#999" stroke-width="3.500"><rect x="958.500" y="2186.500" width="18" height="20" rx="3"/><rect x="985" y="2186.500" width="18" height="20" rx="3"/><rect x="958.500" y="2211" width="18" height="20" rx="3"/><rect x="985" y="2211" width="18" height="20" rx="3"/></g>
</svg>
</body></html>
